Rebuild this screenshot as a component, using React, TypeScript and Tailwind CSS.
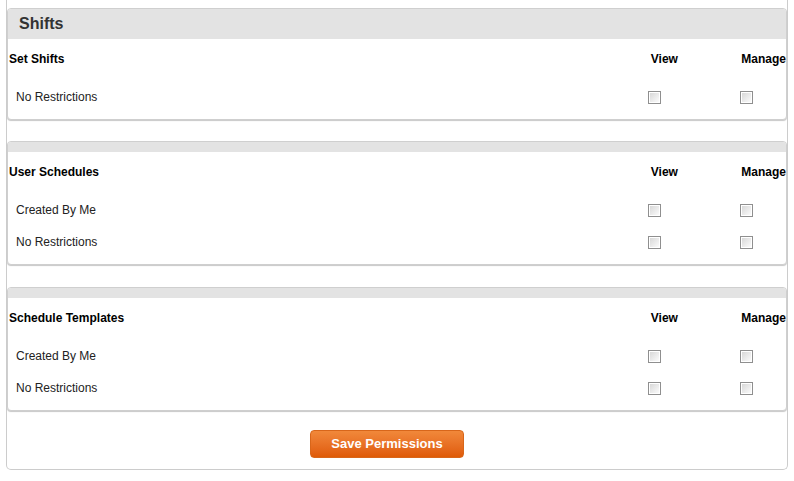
import React from "react";

function Box() {
  return (
    <div className="w-[13px] h-[13px] border border-[#8f8f8f] bg-white p-[1px]">
      <div className="w-full h-full bg-gradient-to-br from-[#d8d8d8] to-[#fbfbfb]" />
    </div>
  );
}

type Section = { title: string; rows: string[]; big?: string };

function Panel({ title, rows, big }: Section) {
  return (
    <div className="border border-[#cfcfcf] rounded-[4px] shadow-[0_1px_1px_#c8c8c8] bg-white">
      {big ? (
        <div className="h-[30px] bg-[#e3e3e3] rounded-t-[3px] flex items-center pl-[11px] text-[16px] font-bold text-[#333]">
          {big}
        </div>
      ) : (
        <div className="h-[10px] bg-[#e3e3e3] rounded-t-[3px]" />
      )}
      <div className="h-[40px] flex items-center text-[12px] font-bold text-black">
        <div className="w-[644px] pl-[1px]">{title}</div>
        <div className="w-[91px] pl-[2px]">View</div>
        <div className="whitespace-nowrap pl-[2px]">Manage</div>
      </div>
      <div className="pt-[2px] pb-[6px]">
        {rows.map((r) => (
          <div key={r} className="h-[32px] flex items-center text-[12px] text-[#222]">
            <div className="w-[644px] pl-[8px]">{r}</div>
            <div className="w-[91px]">
              <div className="ml-[-4px]">
                <Box />
              </div>
            </div>
            <div>
              <div className="ml-[-3px]">
                <Box />
              </div>
            </div>
          </div>
        ))}
      </div>
    </div>
  );
}

export default function App() {
  return (
    <div className="w-[794px] h-[481px] bg-white overflow-hidden" style={{ fontFamily: '"Liberation Sans", Arial, sans-serif' }}>
      <div className="ml-[6px] w-[782px] border-x border-b border-[#cccccc] rounded-b-[5px] pt-[8px] pb-[11px]">
        <Panel big="Shifts" title="Set Shifts" rows={["No Restrictions"]} />
        <div className="mt-[21px]">
          <Panel title="User Schedules" rows={["Created By Me", "No Restrictions"]} />
        </div>
        <div className="mt-[22px]">
          <Panel title="Schedule Templates" rows={["Created By Me", "No Restrictions"]} />
        </div>
        <div className="mt-[19px] flex">
          <button className="ml-[303px] w-[154px] h-[28px] rounded-[4px] border border-[#d8661a] bg-gradient-to-b from-[#f1883a] to-[#df5a05] text-white text-[13px] font-bold">
            Save Permissions
          </button>
        </div>
      </div>
    </div>
  );
}
